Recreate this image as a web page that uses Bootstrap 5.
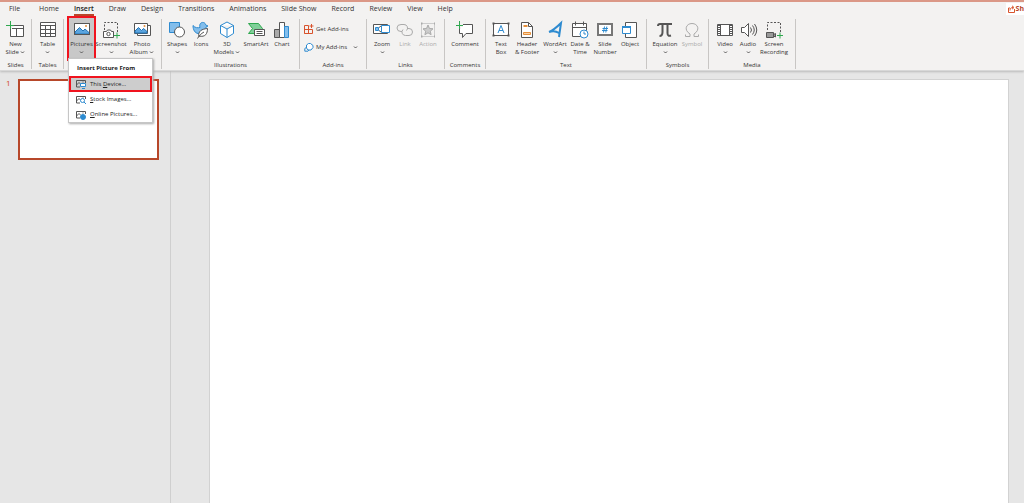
<!DOCTYPE html>
<html lang="en">
<head>
<meta charset="utf-8">
<meta name="viewport" content="width=device-width, initial-scale=1">
<title>Presentation - Insert</title>
<link rel="stylesheet" href="https://cdn.jsdelivr.net/npm/bootstrap@5.3.0/dist/css/bootstrap.min.css">
<style>
:root{--ink:#333;--accent:#b7472a;--line:#c8c6c4;--blue:#2e8bd0}
body{font-family:"Open Sans","Noto Sans",sans-serif;font-size:7px;line-height:8px;color:var(--ink);background:#e6e6e6}
button{font-family:inherit;color:inherit;line-height:inherit}
.app-head{background:#f3f2f1;border-top:2px solid #db9887;border-bottom:1px solid #d8d8d8;box-shadow:0 1px 2px #bbb;z-index:2}
.tabs{gap:15px;padding-left:9px;height:16px}
.tabs .nav-link{padding:0;line-height:14px;height:14px;color:var(--ink)}
.tabs .nav-link.active{font-weight:600;color:#222;box-shadow:inset 0 -2px var(--accent)}
.share{font-size:7px;font-weight:700;color:var(--accent);background:#fff;border:0;height:12px;padding:0 0 0 2px;margin-top:1px;gap:1px}
.ribbon{height:52px}
.group{position:relative;border-right:1px solid var(--line);height:50px;margin-top:1px;padding-top:1px;flex:none;font-size:6px}
.group-name{line-height:8px;height:8px;text-align:center}
.tools{padding-left:3px}
.tool{border:0;background:none;padding:0;font-size:6px;line-height:8px;display:flex;flex-direction:column;align-items:center;white-space:nowrap;flex:none;height:38px;width:24px}
.tool svg{flex:none}
.tool:disabled{color:#aaa}
.w20{width:20px}.w22{width:22px}.w26{width:26px}.w28{width:28px}.w30{width:30px}.w32{width:32px}
.g-sm{width:32px}.g-img{width:98px}.g-ill{width:138px}.g-add{width:67px}.g-link{width:78px}.g-com{width:41px}.g-txt{width:161px}.g-sym{width:62px}.g-med{width:87px}
.pressed{background:#c8c8c8;box-shadow:0 0 0 2px #f0131e;width:25px;height:41px;margin:-2px 1px -2px 2px;padding-top:2px}
.line-tool{border:0;background:none;padding:0;height:18px;font-size:6px;display:flex;align-items:center;gap:2px}
.chev{width:5px;height:8px;flex:none}
.pic-menu{position:absolute;left:4px;top:39px;width:85px;min-width:0;border:1px solid #c6c6c6;border-radius:0;padding:1px 0 0;font-size:6px;box-shadow:1px 1px 2px #aaa;color:#333}
.pic-menu .dropdown-header{font-size:6px;font-weight:700;line-height:16px;padding:0 8px;color:#222}
.pic-menu .dropdown-item{font-size:6px;line-height:15px;height:15px;padding:0 7px;display:flex;align-items:center;gap:4px;color:#222}
.pic-menu .dropdown-item.picked{height:16px;background:#cdcdcd;box-shadow:inset 0 0 0 2px #f0131e}
.thumbs{width:171px;border-right:1px solid #cfcfcf;padding:8px 11px 0 6px;gap:7px;flex:none}
.thumb-no{color:#d24726;font-size:8px;width:5px}
.thumb{border:2px solid var(--accent);background:#fff;aspect-ratio:141/81}
.stage{padding:8px 15px 0 38px}
.slide{background:#fff;border:1px solid #d2d2d2;border-bottom:0}
svg{display:block;fill:none;stroke:#555;stroke-width:1}
.b{stroke:var(--blue)}.bf{fill:#83beec;stroke:var(--blue)}.g{stroke:#2fa84f}.w{fill:#fff}.o{stroke:#d8532c}
</style>
</head>
<body class="vh-100 d-flex flex-column overflow-hidden">
<svg class="d-none"><defs>
<symbol id="chev" viewBox="0 0 5 8"><path d="M1 3.500 2.500 5 4 3.500"/></symbol>
<symbol id="mini" viewBox="0 0 10 10"><path d="M4 8H.5V1.500H9.500V4M.5 6 3 3.500 5 5.500M6.500 3h1"/></symbol>
</defs></svg>

<header class="app-head position-relative">
  <div class="d-flex justify-content-between">
    <nav class="nav tabs flex-nowrap" aria-label="Ribbon tabs">
      <a class="nav-link me-1" href="#">File</a><a class="nav-link" href="#">Home</a><a class="nav-link active" href="#" aria-current="page">Insert</a><a class="nav-link" href="#">Draw</a><a class="nav-link" href="#">Design</a><a class="nav-link" href="#">Transitions</a><a class="nav-link" href="#">Animations</a><a class="nav-link" href="#">Slide Show</a><a class="nav-link" href="#">Record</a><a class="nav-link" href="#">Review</a><a class="nav-link" href="#">View</a><a class="nav-link" href="#">Help</a>
    </nav>
    <button class="share d-flex align-items-center" type="button" aria-label="Share"><svg class="flex-shrink-0" width="7" height="8" viewBox="0 0 7 8"><path class="o" d="M2 3H.5v4.500h6V4M2 5.500C2 3.500 3 2.500 5 2.500M4 .8 6 2.500 4 4.200"/></svg>Sh</button>
  </div>

  <div class="ribbon d-flex">
    <section class="group g-sm d-flex flex-column justify-content-between">
      <div class="d-flex justify-content-center">
        <button class="tool" type="button"><svg width="20" height="20"><path class="w" d="M4.500 5.500h13v11h-13z"/><path d="M4.500 8.500h13M10.500 8.500v8"/><path stroke="#f3f2f1" stroke-width="3" d="M1 5.500h7M4.500 2v7"/><path class="g" d="M0 5.500h8M4.500 1v8"/></svg><span>New</span><span class="d-flex">Slide&nbsp;<svg class="chev"><use href="#chev"/></svg></span></button>
      </div><div class="group-name">Slides</div>
    </section>
    <section class="group g-sm d-flex flex-column justify-content-between">
      <div class="d-flex justify-content-center">
        <button class="tool" type="button"><svg width="20" height="20"><path class="w" d="M2.500 2.500h15v14h-15z"/><path d="M2.500 5.500h15M2.500 9.500h15M2.500 13.500h15M7.500 5.500v11M12.500 5.500v11"/></svg><span>Table</span><svg class="chev"><use href="#chev"/></svg></button>
      </div><div class="group-name">Tables</div>
    </section>
    <section class="group g-img dropdown">
      <div class="tools d-flex">
        <button class="tool pressed" type="button" aria-expanded="true"><svg width="20" height="20"><path class="w" d="M2.500 3.500h15v11h-15z"/><path fill="#5ba5df" stroke="#2474b5" d="M3 12 7.500 7.500 11 11l2-2 4.500 4V14H3z"/><circle cx="14" cy="6" r="1" fill="#e6903b" stroke="none"/><path d="M2.500 3.500h15v11h-15z"/></svg><span>Pictures</span><svg class="chev"><use href="#chev"/></svg></button>
        <button class="tool w32" type="button"><svg width="20" height="20"><path stroke-dasharray="2 1.500" d="M3.500 10V2.500h13V13"/><path class="w" d="M2.500 11.500h3l1-1.500h3l1 1.500h2v6h-10z"/><circle cx="7.500" cy="14" r="1.700"/><path class="g" d="M13 15.500h6M16 12.500v6"/></svg><span>Screenshot</span><svg class="chev"><use href="#chev"/></svg></button>
        <button class="tool w30" type="button"><svg width="20" height="20"><path class="w" d="M5.500 5.500h13v10h-13z"/><path class="w" d="M2.500 3.500h13v10h-13z"/><path fill="#5ba5df" stroke="#2474b5" d="M3 11 6.500 7.500 9.500 10.500l2-2 3.500 3V13H3z"/><circle cx="12.500" cy="6" r="1" fill="#e6903b" stroke="none"/></svg><span>Photo</span><span class="d-flex">Album&nbsp;<svg class="chev"><use href="#chev"/></svg></span></button>
      </div>
      <div class="dropdown-menu pic-menu show">
        <h6 class="dropdown-header">Insert Picture From</h6>
        <a class="dropdown-item picked" href="#"><svg width="10" height="10"><use href="#mini"/><path class="b w" d="M4.500 4.500h5v3h-5zM6 9.500h3"/></svg><span>This <u>D</u>evice...</span></a>
        <a class="dropdown-item" href="#"><svg width="10" height="10"><use href="#mini"/><circle class="b w" cx="6.500" cy="5.500" r="2"/><path class="b" d="M8 7l2 2"/></svg><span><u>S</u>tock Images...</span></a>
        <a class="dropdown-item" href="#"><svg width="10" height="10"><use href="#mini"/><circle cx="7" cy="7" r="2.500" fill="#2e8bd0" class="b"/></svg><span><u>O</u>nline Pictures...</span></a>
      </div>
    </section>
    <section class="group g-ill d-flex flex-column justify-content-between">
      <div class="tools d-flex">
        <button class="tool" type="button"><svg width="20" height="20"><path class="bf" d="M2.500 2.500h10v10h-10z"/><circle class="w" cx="12.500" cy="12" r="5"/></svg><span>Shapes</span><svg class="chev"><use href="#chev"/></svg></button>
        <button class="tool" type="button"><svg width="20" height="20"><path class="bf" d="M2 5.500C4 8 7 8 9 7.500 8 4 10 2 12.500 2.500c1.500.3 2 1.500 2.200 2.500L17 6l-2 1c0 5-4 7-8 6.500C4 13 2 10 2 5.500z"/><path class="w" d="M8 17C6.500 11 11 9 16.500 8.500c0 5-2 9-8.500 7.500M6.500 18.500C8 16 10 13.500 13 12"/></svg><span>Icons</span></button>
        <button class="tool w28" type="button"><svg width="20" height="20"><path class="b w" d="M10 2l6.500 3.500v8L10 17.500l-6.500-4v-8zM3.500 5.500 10 9l6.500-3.500M10 9v8.500"/></svg><span>3D</span><span class="d-flex">Models&nbsp;<svg class="chev"><use href="#chev"/></svg></span></button>
        <button class="tool w30" type="button"><svg width="20" height="20"><path fill="#80cf99" class="g" d="M2.500 3.500h10l4 5-4 5h-10l4-5z"/><path class="w" d="M8.500 9.500h10v6h-10zM10.500 11.500h6M10.500 13.500h6"/></svg><span>SmartArt</span></button>
        <button class="tool w22" type="button"><svg width="20" height="20"><path class="w" d="M7.500 2.500h5v15h-5z"/><path fill="#aaa" d="M2.500 9.500h5v8h-5z"/><path class="bf" d="M12.500 6.500h4v11h-4z"/></svg><span>Chart</span></button>
      </div><div class="group-name">Illustrations</div>
    </section>
    <section class="group g-add d-flex flex-column justify-content-between">
      <div class="ps-1">
        <button class="line-tool" type="button"><svg width="10" height="10"><path class="o" d="M.5 1.500h4v8h-4zM.5 5.500h8v4h-8M4.500 5.500v4M7.500 0v4M5.500 2h4"/></svg>Get Add-ins</button>
        <button class="line-tool" type="button"><svg width="10" height="10"><path class="b w" d="M4.500 1.500h2l2.500 2v2L7 8H4L2.500 6V3z"/><path class="b" d="M3 5 .8 6.500v2.700H4L5 8"/></svg>My Add-ins <svg class="chev ms-1"><use href="#chev"/></svg></button>
      </div><div class="group-name">Add-ins</div>
    </section>
    <section class="group g-link d-flex flex-column justify-content-between">
      <div class="tools d-flex">
        <button class="tool" type="button"><svg width="20" height="20"><path class="w" d="M1.500 4.500h14v9h-14z"/><path class="bf" d="M3.500 7.500h3v3h-3z"/><path class="b w" d="M9.500 5.500h8v7h-8z"/><path d="M7 7.500 9 6M7 10.500 9 12"/></svg><span>Zoom</span><svg class="chev"><use href="#chev"/></svg></button>
        <button class="tool w22" type="button" disabled><svg width="20" height="20"><g stroke="#aaa"><path d="M7 11.500H6a4 3.500 0 1 1 0-7h3a3.500 3.500 0 0 1 2.500 6"/><path d="M12 8.500h2a3.500 3.500 0 0 1 0 7h-3.500a3.500 3.500 0 0 1-2.500-6"/></g></svg><span>Link</span></button>
        <button class="tool" type="button" disabled><svg width="20" height="20"><g stroke="#aaa"><path stroke="#ccc" d="M3.500 3.500h13v13h-13z"/><path fill="#ccc" d="M10 5l1.500 3.500 3.500.3-2.700 2.400.8 3.500L10 12.800l-3.100 1.900.8-3.500L5 8.800l3.500-.3z"/><path stroke-width="2" stroke-dasharray="1.500 11.500" d="M3 3.500h14M3 16.500h14"/></g></svg><span>Action</span></button>
      </div><div class="group-name">Links</div>
    </section>
    <section class="group g-com d-flex flex-column justify-content-between">
      <div class="d-flex justify-content-center">
        <button class="tool w30" type="button"><svg width="20" height="20"><path class="w" d="M4.500 4.500h13v9H11l-3.500 4v-4h-3z"/><path stroke="#f3f2f1" stroke-width="3" d="M1 5.500h7M4.500 2v7"/><path class="g" d="M1 5.500h7M4.500 1v8"/></svg><span>Comment</span></button>
      </div><div class="group-name">Comments</div>
    </section>
    <section class="group g-txt d-flex flex-column justify-content-between">
      <div class="d-flex ps-1">
        <button class="tool w22" type="button"><svg width="20" height="20"><path class="w" d="M2.500 3.500h15v12h-15z"/><path class="b" d="M7 13l3-7.500L13 13M8 10.500h4"/><path stroke-width="2" stroke-dasharray="2 13" d="M1.500 3.500h17M1.500 15.500h17"/></svg><span>Text</span><span>Box</span></button>
        <button class="tool w30" type="button"><svg width="20" height="20"><path class="w" d="M4.500 2.500h7l4 4v11h-11z"/><path d="M11.500 2.500v4h4"/><path stroke="#e6903b" stroke-width="2" d="M6.500 6h4"/><path stroke="#e6903b" fill="#fbd3a5" d="M6.500 12.500h7v2h-7z"/></svg><span>Header</span><span>&amp; Footer</span></button>
        <button class="tool w26" type="button"><svg width="20" height="20"><path class="b" stroke-width="2" d="M4 12C9 10 13 6 16 3l-2 14M4 12c3-1 7-1 10 1"/></svg><span>WordArt</span><svg class="chev"><use href="#chev"/></svg></button>
        <button class="tool" type="button"><svg width="20" height="20"><path class="w" d="M2.500 3.500h14v13h-14z"/><path d="M2.500 7.500h14M5.500 1.500v4M13.500 1.500v4"/><circle class="b w" cx="14" cy="14" r="4"/><path class="b" d="M14 11.500V14h2"/></svg><span>Date &amp;</span><span>Time</span></button>
        <button class="tool w26" type="button"><svg width="20" height="20"><path class="w" stroke="#777" stroke-width="2" d="M3 4h14v11H3z"/><path class="b" d="M9.500 6.500l-1 6M11.800 6.500l-1 6M7.500 8.500h5.500M7 10.500h5.500"/></svg><span>Slide</span><span>Number</span></button>
        <button class="tool" type="button"><svg width="20" height="20"><path class="w" d="M5.500 2.500h11v15h-11z"/><path class="b w" d="M2.500 6.500h8v7h-8z"/><path class="b" stroke-width="2" d="M2 7h9"/></svg><span>Object</span></button>
      </div><div class="group-name">Text</div>
    </section>
    <section class="group g-sym d-flex flex-column justify-content-between">
      <div class="d-flex ps-1">
        <button class="tool w28" type="button"><svg width="20" height="20"><path stroke-width="2" d="M3 6C3 4 4 4 5 4h12M7.500 4v8c0 3-1 4-3 4M12.500 4v9c0 3 1.500 3 3.500 2.500"/></svg><span>Equation</span><svg class="chev"><use href="#chev"/></svg></button>
        <button class="tool w26" type="button" disabled><svg width="20" height="20"><path stroke="#aaa" d="M3.500 14.500v2H8V14C1.500 10 4 3.500 10 3.500S18.500 10 12 14v2.500h4.500v-2"/></svg><span>Symbol</span></button>
      </div><div class="group-name">Symbols</div>
    </section>
    <section class="group g-med d-flex flex-column justify-content-between">
      <div class="d-flex ps-1">
        <button class="tool" type="button"><svg width="20" height="20"><path class="w" d="M2.500 4.500h15v11h-15z"/><path stroke-width="2" stroke-dasharray="1 1" d="M4 5v10M16 5v10"/><path d="M5.500 4.500v11M14.500 4.500v11"/></svg><span>Video</span><svg class="chev"><use href="#chev"/></svg></button>
        <button class="tool w22" type="button"><svg width="20" height="20"><path class="w" d="M3.500 7.500h3l4-4v13l-4-4h-3z"/><path d="M12.500 7.500q2 2.500 0 5M14.500 5.500q3.500 4.500 0 9M16.500 4q4.500 6 0 12"/></svg><span>Audio</span><svg class="chev"><use href="#chev"/></svg></button>
        <button class="tool w30" type="button"><svg width="20" height="20"><path stroke-dasharray="2 1.500" d="M3.500 10V2.500h13V13"/><path fill="#999" d="M2.500 12.500h7v5h-7zM9.500 14.500l2-1v3.500l-2-1z"/><path class="g" d="M13 15.500h6M16 12.500v6"/></svg><span>Screen</span><span>Recording</span></button>
      </div><div class="group-name">Media</div>
    </section>
  </div>
</header>

<main class="d-flex flex-grow-1">
  <aside class="thumbs d-flex align-items-start" aria-label="Slides">
    <span class="thumb-no">1</span>
    <div class="thumb flex-grow-1"></div>
  </aside>
  <section class="stage flex-grow-1 d-flex"><div class="slide flex-grow-1"></div></section>
</main>
<script src="https://cdn.jsdelivr.net/npm/bootstrap@5.3.0/dist/js/bootstrap.bundle.min.js"></script>
</body>
</html>
